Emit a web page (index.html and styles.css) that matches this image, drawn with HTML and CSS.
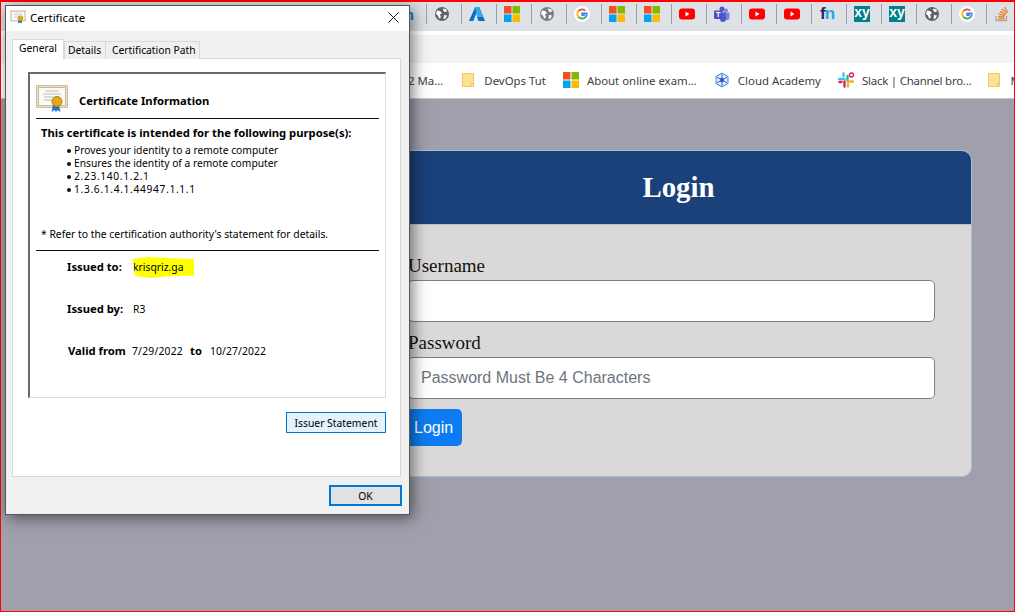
FILE: index.html
```html
<!DOCTYPE html>
<html lang="en">
  <head>
    <meta charset="UTF-8" />
    <title>Certificate</title>
    <link rel="stylesheet" href="styles.css">
  </head>
  <body>
    <svg class="defs" width="0" height="0">
      <symbol id="globe" viewBox="0 0 16 16">
        <circle cx="8" cy="8" r="7" fill="currentColor" />
        <path d="M3 4.500l3 .5 2 2-2 1.500 1 3-2 1-1-3-2-1.500zM9.500 2.500l3 1 .5 2-2.500.5-1.500-2zM10 9l3 .5-1.500 3-2 .5z" fill="#fff" />
      </symbol>
      <symbol id="ms" viewBox="0 0 16 16">
        <rect width="7.500" height="7.500" fill="#f25022" />
        <rect x="8.500" width="7.500" height="7.500" fill="#7fba00" />
        <rect y="8.500" width="7.500" height="7.500" fill="#00a4ef" />
        <rect x="8.500" y="8.500" width="7.500" height="7.500" fill="#ffb900" />
      </symbol>
      <symbol id="google" viewBox="0 0 16 16">
        <circle cx="8" cy="8" r="8" fill="#fff" />
        <path d="M11.300 4.700A4.700 4.700 0 0 0 4.300 5.200" fill="none" stroke="#ea4335" stroke-width="1.800" />
        <path d="M4.300 5.200a4.700 4.700 0 0 0 0 5.600" fill="none" stroke="#fbbc05" stroke-width="1.800" />
        <path d="M4.300 10.800a4.700 4.700 0 0 0 7.200.4" fill="none" stroke="#34a853" stroke-width="1.800" />
        <path d="M11.500 11.200a4.700 4.700 0 0 0 1.200-3.900H8.200v1.700h2.600" fill="none" stroke="#4285f4" stroke-width="1.800" />
      </symbol>
      <symbol id="youtube" viewBox="0 0 16 16">
        <rect y="2.500" width="16" height="11" rx="3" fill="#f00" />
        <path d="M6.500 5.500l4 2.500-4 2.500z" fill="#fff" />
      </symbol>
      <symbol id="folder" viewBox="0 0 12 14">
        <path d="M.5.500h11v13H.5z" fill="#fde293" stroke="#ecc95f" />
        <path d="M9 13.500v-3h2.500" fill="none" stroke="#ecc95f" />
      </symbol>
      <symbol id="cert" viewBox="0 0 32 28">
        <rect x=".5" y=".5" width="31" height="22" fill="#e9dfca" stroke="#b5a488" stroke-dasharray="1 .5" />
        <rect x="2.500" y="2.500" width="27" height="18" fill="#fbfaf5" stroke="#c9b99c" />
        <path d="M9 6h14M7 9h18M8 12h10M8 15h8" stroke="#b9bdc4" />
        <path d="M17 20l-1.500 7 3-2 1.500 2 1.500-2 3 2-1.500-7z" fill="#2f6fd0" />
        <circle cx="21" cy="16.500" r="5" fill="#e3a916" stroke="#b5800d" />
      </symbol>
    </svg>

    <header class="browser">
      <div class="tabstrip">
        <span class="fav fav-cut">n</span>
        <span class="fav"><svg class="ico ico-grey"><use href="#globe" /></svg></span>
        <span class="fav">
          <svg class="ico" viewBox="0 0 16 16">
            <path d="M6.200 1h4L16 15H9.500L8 11h3L8.500 4.500 4.200 15H0z" fill="#0a6fc2" />
            <path d="M6.200 1h4L14 11H8z" fill="#39a9e8" />
          </svg>
        </span>
        <span class="fav"><svg class="ico"><use href="#ms" /></svg></span>
        <span class="fav"><svg class="ico ico-light"><use href="#globe" /></svg></span>
        <span class="fav"><svg class="ico"><use href="#google" /></svg></span>
        <span class="fav"><svg class="ico"><use href="#ms" /></svg></span>
        <span class="fav"><svg class="ico"><use href="#ms" /></svg></span>
        <span class="fav"><svg class="ico"><use href="#youtube" /></svg></span>
        <span class="fav">
          <svg class="ico" viewBox="0 0 16 16">
            <circle cx="12" cy="4.500" r="2" fill="#7b83eb" />
            <circle cx="8" cy="3" r="2.500" fill="#5059c9" />
            <path d="M9 6.500h6.500V12a2.500 2.500 0 0 1-4 1.500z" fill="#7b83eb" />
            <path d="M5 6.500h7V13a3 3 0 0 1-6 0z" fill="#5059c9" />
            <rect y="4.500" width="8.500" height="8.500" rx="1" fill="#4b53bc" />
            <path d="M2 6.500h4.500M4.250 6.500V11" stroke="#fff" stroke-width="1.200" />
          </svg>
        </span>
        <span class="fav"><svg class="ico"><use href="#youtube" /></svg></span>
        <span class="fav"><svg class="ico"><use href="#youtube" /></svg></span>
        <span class="fav fav-fn"><b>f</b><i>n</i></span>
        <span class="fav"><span class="xy">xy</span></span>
        <span class="fav"><span class="xy">xy</span></span>
        <span class="fav"><svg class="ico ico-grey"><use href="#globe" /></svg></span>
        <span class="fav"><svg class="ico"><use href="#google" /></svg></span>
        <span class="fav">
          <svg class="ico" viewBox="0 0 16 16">
            <path d="M2 10v4.500h10.500V10" fill="none" stroke="#a8a5a1" stroke-width="1.300" />
            <path d="M4 12.500h6.500M4.200 10.300l6.400.6M4.800 8l6.200 1.700M6 5.400l5.600 3M8 3l4.800 4.300M10.500 1l3.300 5.500" stroke="#f48024" stroke-width="1.300" />
          </svg>
        </span>
      </div>
      <div class="toolbar"></div>
      <nav class="bookmarks">
        <span class="bm bm-first">2 Ma...</span>
        <span class="bm"><svg class="bm-folder"><use href="#folder" /></svg>DevOps Tut</span>
        <span class="bm"><svg class="bm-ico"><use href="#ms" /></svg>About online exam...</span>
        <span class="bm">
          <svg class="bm-ico" viewBox="0 0 16 16">
            <path d="M8 1l6 3.500v7L8 15l-6-3.500v-7z" fill="#dbe6fb" stroke="#4a7fe0" />
            <path d="M8 2v12M2.800 5l10.400 6M13.200 5L2.800 11" stroke="#3b6fd8" />
            <circle cx="8" cy="8" r="2.200" fill="#2a5bc4" />
          </svg>Cloud Academy
        </span>
        <span class="bm bm-tight">
          <svg class="bm-ico" viewBox="0 0 16 16">
            <path d="M1 7h5.500" stroke="#36c5f0" stroke-width="2.400" stroke-linecap="round" />
            <path d="M5.500 1.500V4" stroke="#36c5f0" stroke-width="2.400" stroke-linecap="round" />
            <path d="M9.500 4v5" stroke="#2eb67d" stroke-width="2.400" stroke-linecap="round" />
            <path d="M10 9.500h5" stroke="#ecb22e" stroke-width="2.400" stroke-linecap="round" />
            <path d="M10 14.500V12" stroke="#ecb22e" stroke-width="2.400" stroke-linecap="round" />
            <path d="M6.500 9.500v5M1.500 10h2" stroke="#e01e5a" stroke-width="2.400" stroke-linecap="round" />
            <circle cx="13.500" cy="3" r="2" fill="#fff" stroke="#e01e5a" stroke-width="1.400" />
          </svg>Slack | Channel bro...
        </span>
        <span class="bm"><svg class="bm-folder"><use href="#folder" /></svg>M</span>
      </nav>
    </header>

    <main class="page">
      <section class="card">
        <h1 class="card-head">Login</h1>
        <form class="card-body">
          <label class="field">
            <span class="field-label">Username</span>
            <input class="field-input" type="text" />
          </label>
          <label class="field">
            <span class="field-label">Password</span>
            <input class="field-input" type="password" placeholder="Password Must Be 4 Characters" />
          </label>
          <button class="login-btn" type="button">Login</button>
        </form>
      </section>
    </main>

    <div class="dialog">
      <div class="titlebar">
        <svg class="title-ico"><use href="#cert" /></svg>
        <span class="title-text">Certificate</span>
        <svg class="close" viewBox="0 0 11 11"><path d="M.5.500l10 10M10.500.500l-10 10" stroke="#111" /></svg>
      </div>
      <div class="dialog-body">
        <div class="tabs">
          <span class="tab tab-on">General</span>
          <span class="tab tab-details">Details</span>
          <span class="tab tab-path">Certification Path</span>
        </div>
        <div class="panel">
          <div class="infobox">
            <div class="info-head">
              <svg class="info-ico"><use href="#cert" /></svg>
              <strong class="info-title">Certificate Information</strong>
            </div>
            <div class="info-main">
              <strong>This certificate is intended for the following purpose(s):</strong>
              <ul class="purposes">
                <li>Proves your identity to a remote computer</li>
                <li>Ensures the identity of a remote computer</li>
                <li class="oid">2.23.140.1.2.1</li>
                <li class="oid">1.3.6.1.4.1.44947.1.1.1</li>
              </ul>
              <p class="refer">* Refer to the certification authority's statement for details.</p>
            </div>
            <div class="issued">
              <div class="issued-row"><strong class="k">Issued to:</strong><span class="marked">krisqriz.ga</span></div>
              <div class="issued-row"><strong class="k">Issued by:</strong><span>R3</span></div>
              <div class="issued-row issued-valid">
                <strong class="k-valid">Valid from</strong><span class="date">7/29/2022</span><strong class="to">to</strong><span class="date-end">10/27/2022</span>
              </div>
            </div>
          </div>
          <div class="panel-actions">
            <button class="win-btn win-btn-hover" type="button">Issuer Statement</button>
          </div>
        </div>
        <div class="dialog-actions">
          <button class="win-btn win-btn-ok" type="button">OK</button>
        </div>
      </div>
    </div>
  </body>
</html>
```

FILE: styles.css
```css
* {
  box-sizing: border-box;
}

body {
  margin: 0;
  height: 612px;
  overflow: hidden;
  display: flex;
  flex-direction: column;
  border: 1px solid #f00;
  border-top-width: 2px;
  background: #a0a0ac;
  font-family: "Noto Sans", "Open Sans", sans-serif;
}

.defs {
  position: absolute;
}

/* browser chrome */
.tabstrip {
  height: 29px;
  display: flex;
  padding-left: 391px;
  background: #dee1e6;
  overflow: hidden;
}

.fav {
  flex: 0 0 35px;
  height: 20px;
  margin-top: 2px;
  display: flex;
  align-items: center;
  justify-content: center;
  padding-right: 4px;
  border-right: 1px solid #9aa0a6;
}

.fav-cut {
  justify-content: flex-end;
  padding-right: 12px;
  font: bold 15px "Liberation Sans", sans-serif;
  color: #0a88c4;
}

.ico {
  width: 16px;
  height: 16px;
}

.ico-grey {
  color: #5f6368;
}

.ico-light {
  color: #7b7f84;
}

.fav-fn {
  font: bold 17px "Liberation Sans", sans-serif;
  letter-spacing: -1px;
}

.fav-fn b {
  color: #1d2a6b;
}

.fav-fn i {
  font-style: normal;
  color: #1ea5e0;
}

.xy {
  width: 16px;
  height: 16px;
  display: flex;
  align-items: flex-start;
  justify-content: center;
  background: #00808a;
  color: #fff;
  font: bold 14px/12px "Liberation Sans", sans-serif;
}

.toolbar {
  height: 32px;
  border-top: 4px solid #fff;
  background: #f1f3f4;
}

.bookmarks {
  height: 36px;
  display: flex;
  align-items: center;
  gap: 17px;
  padding: 0 0 1px 407px;
  background: #fff;
  border-bottom: 1px solid #c4c5c9;
  overflow: hidden;
  white-space: nowrap;
  font-size: 11.400px;
  color: #3c4043;
}

.bm {
  display: flex;
  align-items: center;
}

.bm-first {
  margin-right: 2px;
}

.bm-tight {
  letter-spacing: -0.200px;
}

.bm-folder {
  width: 12px;
  height: 14px;
  margin-right: 10px;
}

.bm-ico {
  width: 16px;
  height: 16px;
  margin-right: 8px;
}

/* login page */
.page {
  flex: 1;
  padding: 51px 42px 0 0;
}

.card {
  width: 587px;
  height: 327px;
  margin-left: auto;
  display: flex;
  flex-direction: column;
  border: 1px solid #a9bcd8;
  border-radius: 10px;
  background: #dad8d9;
  overflow: hidden;
}

.card-head {
  height: 74px;
  flex: none;
  margin: 0;
  background: #1a417a;
  border-bottom: 1px solid #b5c3d8;
  color: #fff;
  font: bold 28.800px/72px "Liberation Serif", serif;
  text-align: center;
}

.card-body {
  padding: 30px 36px 0 22px;
}

.field {
  display: block;
  margin-bottom: 10px;
}

.field-label {
  display: block;
  height: 25px;
  font: 19px/21px "Liberation Serif", serif;
  color: #111;
}

.field-input {
  display: block;
  width: 100%;
  height: 42px;
  padding: 0 12px;
  border: 1px solid #808080;
  border-radius: 5px;
  background: #fff;
  font: 16px "Liberation Sans", sans-serif;
}

.field-input::placeholder {
  color: #6c757d;
}

.login-btn {
  display: block;
  width: 59px;
  height: 37px;
  margin-left: -5px;
  padding: 0 11px;
  border: 0;
  border-radius: 5px;
  background: #0d7cf2;
  color: #fff;
  font: 16px "Liberation Sans", sans-serif;
}

/* certificate dialog */
.dialog {
  position: absolute;
  left: 5px;
  top: 5px;
  width: 405px;
  height: 510px;
  display: flex;
  flex-direction: column;
  border: 1px solid #565656;
  box-shadow: 3px 3px 14px rgba(0, 0, 0, 0.5);
  background: #f0f0f0;
  font-size: 10.350px;
  color: #000;
}

.dialog strong {
  font-size: 11.250px;
}

.titlebar {
  height: 25px;
  flex: none;
  display: flex;
  align-items: center;
  padding: 0 10px 3px 4px;
  background: #fff;
}

.title-ico {
  width: 16px;
  height: 14px;
  margin-right: 4px;
}

.title-text {
  flex: 1;
  font-size: 11.500px;
}

.close {
  width: 11px;
  height: 11px;
}

.dialog-body {
  flex: 1;
  padding: 7px 8px 8px 6px;
  display: flex;
  flex-direction: column;
}

.tabs {
  height: 20px;
  flex: none;
  display: flex;
  align-items: flex-end;
  position: relative;
  top: 1px;
  white-space: nowrap;
  font-size: 10.300px;
}

.tab {
  height: 18px;
  padding: 0 6px;
  border: 1px solid #d9d9d9;
  border-bottom: 0;
  background: #f0f0f0;
  margin-left: -1px;
  line-height: 16px;
}

.tab-on {
  width: 52px;
  height: 20px;
  margin-left: 0;
  padding: 0 6px;
  background: #fff;
  position: relative;
  z-index: 1;
}

.tab-details {
  width: 42px;
  margin-left: 0;
  padding-left: 3px;
}

.tab-path {
  width: 95px;
}

.panel {
  height: 419px;
  flex: none;
  padding: 13px 14px 0 15px;
  border: 1px solid #d9d9d9;
  background: #fff;
}

.infobox {
  height: 326px;
  padding: 11px 6px 0 6px;
  border: 1px solid #dcdcdc;
  border-top: 2px solid #696969;
  border-left: 2px solid #696969;
}

.info-head {
  height: 34px;
  display: flex;
  align-items: center;
  border-bottom: 1px solid #111;
  padding-bottom: 6px;
  margin-bottom: 6px;
}

.info-ico {
  width: 32px;
  height: 28px;
  margin-right: 11px;
}

.dialog .info-title {
  margin-top: 4px;
}

.info-main {
  height: 126px;
  padding-left: 5px;
  border-bottom: 1px solid #111;
}

.purposes {
  margin: 4px 0 0;
  padding: 0 0 0 26px;
  list-style: none;
  line-height: 13px;
  font-size: 10.250px;
}

.purposes li::before {
  content: "";
  display: inline-block;
  width: 4px;
  height: 4px;
  margin: 0 3px 1px 0;
  border-radius: 50%;
  background: #111;
}

.purposes .oid {
  letter-spacing: 0.650px;
}

.refer {
  margin: 32px 0 0;
  line-height: 13px;
}

.issued {
  padding: 6px 0 0 31px;
}

.issued-row {
  height: 42px;
  display: flex;
  align-items: flex-start;
  line-height: 20px;
}

.issued-valid {
  padding-left: 1px;
}

.k {
  width: 66px;
  flex: none;
}

.k-valid {
  width: 64px;
  flex: none;
}

.date {
  width: 58px;
  letter-spacing: 0.200px;
}

.date-end {
  letter-spacing: 0.100px;
}

.dialog .to {
  width: 20px;
}

.marked {
  width: 61px;
  height: 21px;
  background: #ff0;
  clip-path: polygon(0 8%, 25% 0, 60% 6%, 100% 10%, 100% 88%, 60% 92%, 30% 100%, 3% 90%);
}

.panel-actions {
  display: flex;
  justify-content: flex-end;
  margin-top: 14px;
}

.win-btn {
  font: inherit;
  color: #000;
  padding: 0;
}

.win-btn-hover {
  width: 100px;
  height: 21px;
  border: 1px solid #0078d7;
  background: #e5f1fb;
}

.dialog-actions {
  display: flex;
  justify-content: flex-end;
  margin: 8px -1px 0 0;
}

.win-btn-ok {
  width: 73px;
  height: 21px;
  border: 2px solid #0078d7;
  background: #e1e1e1;
}
```
